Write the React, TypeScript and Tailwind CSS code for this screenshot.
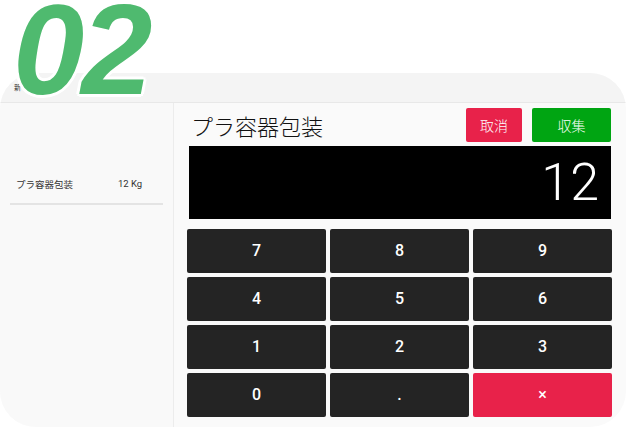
import React from "react";

const keys: { label: string; danger?: boolean }[] = [
  { label: "7" },
  { label: "8" },
  { label: "9" },
  { label: "4" },
  { label: "5" },
  { label: "6" },
  { label: "1" },
  { label: "2" },
  { label: "3" },
  { label: "0" },
  { label: "." },
  { label: "×", danger: true },
];

const jp = "font-['Noto_Sans_CJK_JP','Noto_Sans',sans-serif]";

export default function App() {
  return (
    <div className="relative h-[428px] w-[626px] overflow-hidden bg-white font-['Roboto','Noto_Sans_CJK_JP',sans-serif]">
      <div className="mt-[73px] flex h-[354px] flex-col overflow-hidden rounded-[36px] bg-[#fafafa]">
        <div className={`flex h-[30px] items-center border-b border-[#e8e8e8] bg-[#f4f4f4] pl-[14px] text-[7px] text-[#333] ${jp}`}>
          新
        </div>

        <div className="flex flex-1">
          {/* sidebar */}
          <div className="w-[174px] border-r border-[#ececec] bg-[#f9f9f9]">
            <div className="mx-[10px] mt-[74px] flex border-b-2 border-[#e4e4e4] pb-[12px] pl-[6px] leading-[14px] text-[#333]">
              <span className={`w-[102px] text-[9.5px] ${jp}`}>プラ容器包装</span>
              <span className="text-[9.5px]">12 Kg</span>
            </div>
          </div>

          {/* main */}
          <div className="flex flex-1 flex-col pl-[13px] pr-[14px] pt-[5px]">
            <div className="flex h-[34px] items-center pl-[4px] pr-[1px]">
              <h1 className={`flex-1 text-[22px] font-light leading-none text-[#111] ${jp}`}>プラ容器包装</h1>
              <button className={`h-full w-[56px] rounded-[2px] bg-[#e8224a] text-[14px] font-light text-white ${jp}`}>
                取消
              </button>
              <button className={`ml-[10px] h-full w-[79px] rounded-[2px] bg-[#00a512] text-[14px] font-light text-white ${jp}`}>
                収集
              </button>
            </div>

            <div className="mx-[2px] mr-[1px] mt-[4px] flex h-[73px] items-center justify-end bg-black pr-[12px]">
              <span className="text-[52px] font-light leading-none text-white">12</span>
            </div>

            <div className="mt-[10px] grid grid-cols-3 gap-[4px]">
              {keys.map((k) => (
                <button
                  key={k.label}
                  className={`flex h-[44px] items-center justify-center rounded-[2px] text-[16px] font-medium text-white ${
                    k.danger ? "bg-[#e8224a]" : "bg-[#242424]"
                  }`}
                >
                  {k.label}
                </button>
              ))}
            </div>
          </div>
        </div>
      </div>

      {/* step number */}
      <span className="absolute left-[13px] top-[4px] font-['Liberation_Sans',sans-serif] text-[128px] font-bold italic leading-[92px] tracking-[-3px] text-[#4fba6f] [text-shadow:3px_0_0_#fff,-3px_0_0_#fff,0_3px_0_#fff,0_-3px_0_#fff,2px_2px_0_#fff,-2px_-2px_0_#fff,2px_-2px_0_#fff,-2px_2px_0_#fff]">
        02
      </span>
    </div>
  );
}
